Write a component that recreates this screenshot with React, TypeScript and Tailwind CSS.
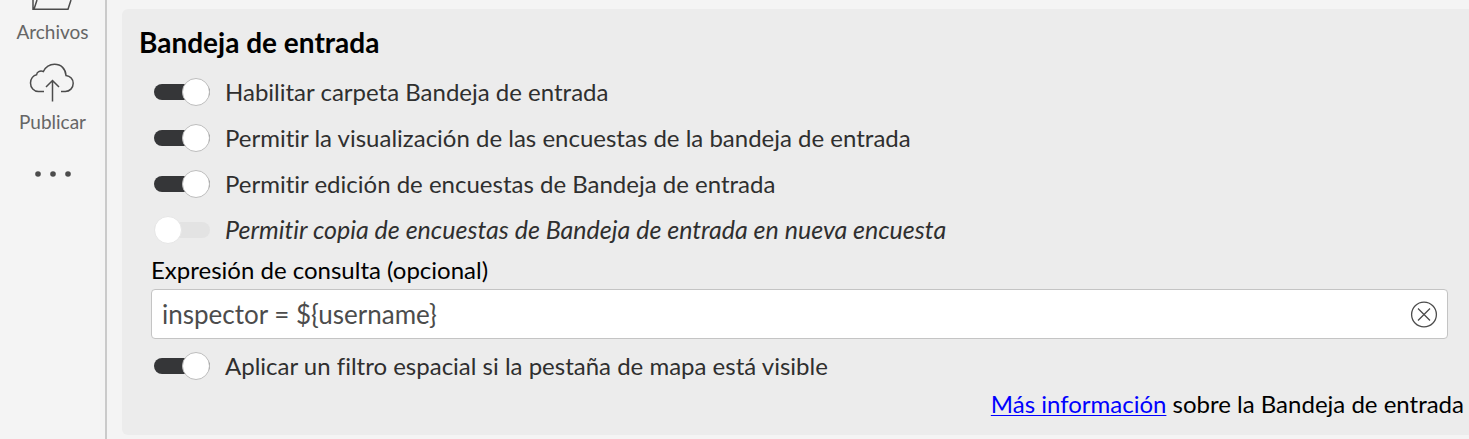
import React, { useState } from 'react';

interface ToggleRowProps {
  label: string;
  checked: boolean;
  disabled?: boolean;
  onChange?: (checked: boolean) => void;
}

const ToggleRow = ({ label, checked, disabled = false, onChange }: ToggleRowProps) => {
  return (
    <label className={`flex h-[46px] items-center gap-[15px] text-[#2f2f2f] ${disabled ? 'text-[25px] italic' : ''}`}>
      <input
        type="checkbox"
        role="switch"
        checked={checked}
        disabled={disabled}
        onChange={(e) => onChange?.(e.target.checked)}
        className="relative h-7 w-14 shrink-0 appearance-none before:absolute before:inset-x-0 before:top-[6px] before:h-4 before:rounded-full before:bg-[#353638] after:absolute after:left-0 after:top-0 after:h-7 after:w-7 after:rounded-full after:border after:border-[#bdbdbd] after:bg-white checked:after:left-7 disabled:before:bg-[#e3e3e3] disabled:after:border-[#e6e6e6]"
      />
      <span>{label}</span>
    </label>
  );
};

const FolderIcon = () => (
  <svg width="46" height="12" viewBox="0 0 46 12" fill="none" stroke="#4c4c4c" strokeWidth="1.5">
    <path d="M3 0V9.2H38L41 0M4 9.2L7 0" />
  </svg>
);

const CloudUploadIcon = () => (
  <svg width="46" height="40" viewBox="0 0 46 40" fill="none" stroke="#4c4c4c" strokeWidth="1.5">
    <path d="M15 29.5H9.5C4.8 29.5 1.5 25.7 1.5 21C1.5 16.5 4.4 13.3 7.6 12.7C7.8 10 10.8 8.3 14.4 9.5C16.6 5 20.8 2.3 25.5 2.3C32.2 2.3 36.5 6.8 37 13.5C41.3 14 44.2 17.3 44.2 21.3C44.2 25.9 40.8 29.5 36.3 29.5H32" />
    <path d="M23.5 39.5V18.5M17 25L23.5 18.5L30 25" />
  </svg>
);

const ClearIcon = () => (
  <svg width="28" height="28" viewBox="0 0 28 28" fill="none" stroke="#4c4c4c" strokeWidth="1.3">
    <circle cx="14" cy="14.5" r="12.4" />
    <path d="M8 8.5L20 20.5M20 8.5L8 20.5" />
  </svg>
);

const App = () => {
  const [enabled, setEnabled] = useState(true);
  const [canView, setCanView] = useState(true);
  const [canEdit, setCanEdit] = useState(true);
  const [spatialFilter, setSpatialFilter] = useState(true);
  const [query, setQuery] = useState('inspector = ${username}');

  return (
    <div className="flex min-h-screen bg-[#f4f4f4] font-['Lato','Liberation_Sans',sans-serif] text-2xl [font-variant-ligatures:none]">
      <nav className="flex w-[107px] shrink-0 flex-col items-center border-r-2 border-[#cacaca] text-[19px] leading-6 text-[#666666]">
        <button type="button" className="flex flex-col items-center gap-2">
          <FolderIcon />
          Archivos
        </button>
        <button type="button" className="mt-[18px] flex flex-col items-center gap-2">
          <CloudUploadIcon />
          Publicar
        </button>
        <button type="button" aria-label="Más" className="mt-[29px] p-2">
          <svg width="36" height="6" viewBox="0 0 36 6" fill="#4c4c4c">
            <circle cx="3" cy="3" r="2.8" />
            <circle cx="18" cy="3" r="2.8" />
            <circle cx="33" cy="3" r="2.8" />
          </svg>
        </button>
      </nav>

      <main className="min-w-0 flex-1 pt-[9px] pb-[3px] pl-[15px]">
        <section className="rounded-l-md bg-[#ececec] pt-4 pr-[5px] pb-4 pl-[17px]">
          <h1 className="text-[28px] leading-[34px] font-bold text-black">Bandeja de entrada</h1>
          <div className="mt-[10px] pl-[15px]">
            <ToggleRow label="Habilitar carpeta Bandeja de entrada" checked={enabled} onChange={setEnabled} />
            <ToggleRow
              label="Permitir la visualización de las encuestas de la bandeja de entrada"
              checked={canView}
              onChange={setCanView}
            />
            <ToggleRow
              label="Permitir edición de encuestas de Bandeja de entrada"
              checked={canEdit}
              onChange={setCanEdit}
            />
            <ToggleRow
              label="Permitir copia de encuestas de Bandeja de entrada en nueva encuesta"
              checked={false}
              disabled
            />
          </div>
          <div className="pr-4 pl-3">
            <label htmlFor="query" className="block h-9 leading-[34px] text-black">
              Expresión de consulta (opcional)
            </label>
            <div className="flex h-[50px] items-center rounded-[4px] border border-[#c4c4c4] bg-white pr-[9px] pl-[10px]">
              <input
                id="query"
                type="text"
                value={query}
                onChange={(e) => setQuery(e.target.value)}
                className="min-w-0 flex-1 bg-transparent text-[26px] text-[#4c4c4c] outline-none"
              />
              <button type="button" aria-label="Borrar" onClick={() => setQuery('')}>
                <ClearIcon />
              </button>
            </div>
          </div>
          <div className="mt-1 pl-[15px]">
            <ToggleRow
              label="Aplicar un filtro espacial si la pestaña de mapa está visible"
              checked={spatialFilter}
              onChange={setSpatialFilter}
            />
          </div>
          <p className="text-right leading-[30px] text-black">
            <a href="#" className="text-[#0000ff] underline decoration-1 underline-offset-2">
              Más información
            </a>{' '}
            sobre la Bandeja de entrada
          </p>
        </section>
      </main>
    </div>
  );
};

export default App;
